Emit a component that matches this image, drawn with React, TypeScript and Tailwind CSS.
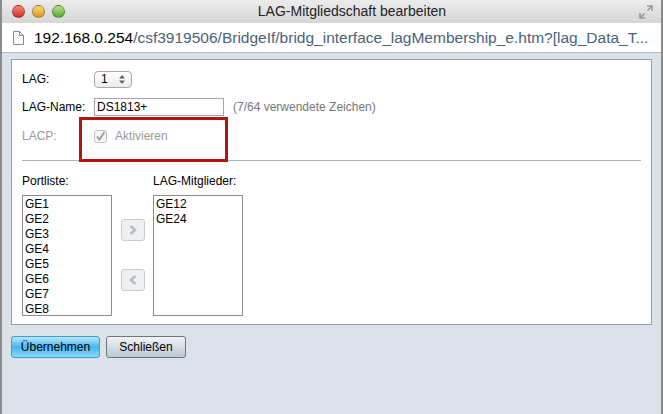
import React from 'react'

const ports = ['GE1', 'GE2', 'GE3', 'GE4', 'GE5', 'GE6', 'GE7', 'GE8']
const members = ['GE12', 'GE24']

function Light({ color }: { color: string }) {
  return <span className={`h-[13px] w-[13px] rounded-full border border-black/30 ${color}`} />
}

export default function App() {
  return (
    <div className="flex h-[414px] w-[663px] flex-col overflow-hidden border-x-2 border-[#8a8a8a] bg-[#dbe2e9] font-['Liberation_Sans',Arial,sans-serif] text-[12px] text-black">
      {/* title bar */}
      <div className="relative flex h-[23px] items-center bg-gradient-to-b from-[#ececec] to-[#d6d6d6] pl-[10px] pr-[8px]">
        <div className="flex gap-[7px]">
          <Light color="bg-gradient-to-b from-[#f5857c] to-[#d3271f]" />
          <Light color="bg-gradient-to-b from-[#fad77a] to-[#d99a16]" />
          <Light color="bg-gradient-to-b from-[#b6e58a] to-[#55a82c]" />
        </div>
        <div className="flex-1 text-center text-[14px] text-[#222]">LAG-Mitgliedschaft bearbeiten</div>
        <svg width="14" height="14" viewBox="0 0 14 14" className="text-[#9a9a9a]">
          <path d="M8 1h5v5M13 1L8.5 5.5M6 13H1V8M1 13l4.5-4.5" stroke="currentColor" strokeWidth="1.6" fill="none" />
        </svg>
      </div>
      {/* url bar */}
      <div className="flex h-[30px] items-center border-b border-[#b8b8b8] bg-white pl-[11px] text-[15.5px] leading-none">
        <svg width="11" height="14" viewBox="0 0 11 14" className="mr-[10px]">
          <path d="M.5.5h6l4 4v9H.5z M6.5.5v4h4" fill="#fafafa" stroke="#888" strokeWidth="1" />
        </svg>
        <span className="whitespace-nowrap">
          <span className="text-black">192.168.0.254</span>
          <span className="text-[#4b6277]">/csf3919506/BridgeIf/bridg_interface_lagMembership_e.htm?[lag_Data_T...</span>
        </span>
      </div>
      {/* page */}
      <div className="flex flex-1 flex-col px-[9px] pt-[6px]">
        <div className="h-[266px] border border-[#8ea0a8] bg-white px-[10px] pt-[10px]">
          <div className="flex h-[18px] items-center">
            <span className="w-[72px]">LAG:</span>
            <span className="flex h-[17px] w-[38px] items-center justify-between rounded-[4px] border border-[#a8a8a8] bg-gradient-to-b from-white to-[#ececec] px-[6px] text-[12px]">
              1
              <svg width="6" height="9" viewBox="0 0 6 9"><path d="M3 0L6 3.5H0zM3 9L0 5.5h6z" fill="#666" /></svg>
            </span>
          </div>
          <div className="mt-[10px] flex h-[18px] items-center">
            <span className="w-[72px]">LAG-Name:</span>
            <span className="flex h-[18px] w-[130px] items-center border border-[#a5a5a5] px-[2px]">DS1813+</span>
            <span className="ml-[9px] text-[#777]">(7/64 verwendete Zeichen)</span>
          </div>
          <div className="relative mt-[12px] flex h-[16px] items-center text-[#9a9a9a]">
            <span className="w-[72px]">LACP:</span>
            <svg width="13" height="13" viewBox="0 0 13 13" className="mr-[8px]">
              <rect x=".5" y=".5" width="12" height="12" rx="2" fill="#f4f4f4" stroke="#c4c4c4" />
              <path d="M3 6.5l2.5 3L10.5 2" stroke="#9a9a9a" strokeWidth="1.8" fill="none" />
            </svg>
            <span>Aktivieren</span>
            <span className="absolute left-[57px] top-[-11px] h-[45px] w-[149px] border-[3px] border-[#b0170f]" />
          </div>
          <div className="mt-[16px] border-t border-[#a9b6bf]" />
          <div className="mt-[13px] flex">
            <div className="flex flex-col">
              <span className="h-[14px] leading-[14px]">Portliste:</span>
              <div className="mt-[7px] h-[121px] w-[90px] border border-[#8c8c8c] pl-[2px] pt-[1px] leading-[15px]">
                {ports.map((p) => (
                  <div key={p}>{p}</div>
                ))}
              </div>
            </div>
            <div className="flex w-[41px] flex-col items-center pt-[45px]">
              <span className="flex h-[22px] w-[24px] items-center justify-center rounded-[3px] border border-[#c8ccd0] bg-[#eef0f2]">
                <svg width="8" height="10" viewBox="0 0 8 10"><path d="M1.5 1l4.5 4-4.5 4" stroke="#b4bcc4" strokeWidth="2.4" fill="none" /></svg>
              </span>
              <span className="mt-[28px] flex h-[22px] w-[24px] items-center justify-center rounded-[3px] border border-[#c8ccd0] bg-[#eef0f2]">
                <svg width="8" height="10" viewBox="0 0 8 10"><path d="M6.5 1L2 5l4.5 4" stroke="#b4bcc4" strokeWidth="2.4" fill="none" /></svg>
              </span>
            </div>
            <div className="flex flex-col">
              <span className="h-[14px] leading-[14px]">LAG-Mitglieder:</span>
              <div className="mt-[7px] h-[121px] w-[90px] border border-[#8c8c8c] pl-[2px] pt-[1px] leading-[15px]">
                {members.map((p) => (
                  <div key={p}>{p}</div>
                ))}
              </div>
            </div>
          </div>
        </div>
        <div className="mt-[11px] flex gap-[6px]">
          <button className="h-[22px] w-[89px] rounded-[3px] border border-[#3a9fd6] bg-gradient-to-b from-[#b8e6fb] via-[#3fb8ee] to-[#8fd8f7] text-[12px]">
            Übernehmen
          </button>
          <button className="h-[22px] w-[80px] rounded-[3px] border border-[#6a7884] bg-gradient-to-b from-[#f2f4f6] to-[#bcc8d2] text-[12px]">
            Schließen
          </button>
        </div>
      </div>
    </div>
  )
}
